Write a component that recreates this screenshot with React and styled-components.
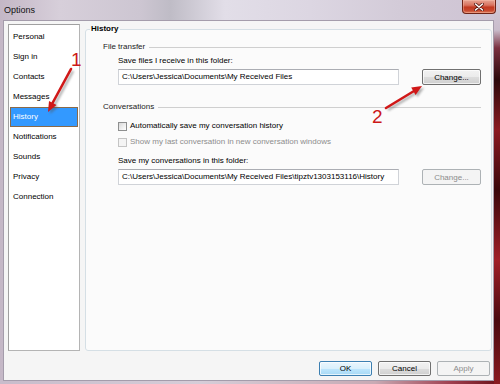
import React from "react";
import styled, { createGlobalStyle } from "styled-components";

const GlobalStyle = createGlobalStyle`
  html, body {
    margin: 0;
    padding: 0;
  }
  body {
    width: 500px;
    height: 384px;
    overflow: hidden;
    font-family: "Liberation Sans", Arial, sans-serif;
  }
  * {
    box-sizing: border-box;
  }
`;

const navItems = [
  "Personal",
  "Sign in",
  "Contacts",
  "Messages",
  "History",
  "Notifications",
  "Sounds",
  "Privacy",
  "Connection",
];

const App = () => {
  return (
    <>
      <GlobalStyle />
      <Frame>
        <TitleBar>
          <Title>Options</Title>
          <CloseButton aria-label="Close">
            <svg width="10" height="8" viewBox="0 0 10 8">
              <path d="M1.5 1 L8.5 7 M8.5 1 L1.5 7" stroke="#5a1810" strokeWidth="3" strokeLinecap="round" />
              <path d="M1.5 1 L8.5 7 M8.5 1 L1.5 7" stroke="#ffffff" strokeWidth="1.6" strokeLinecap="round" />
            </svg>
          </CloseButton>
        </TitleBar>

        <Client>
          <MainRow>
            <NavList>
              {navItems.map((item) => (
                <NavItem key={item} $active={item === "History"}>
                  {item}
                </NavItem>
              ))}
            </NavList>

            <Panel>
              <Legend>History</Legend>

              <SectionHeader>
                <span>File transfer</span>
                <Rule />
              </SectionHeader>
              <Indent>
                <FieldLabel>Save files I receive in this folder:</FieldLabel>
                <PathRow>
                  <PathBox>C:\Users\Jessica\Documents\My Received Files</PathBox>
                  <SmallButton>Change...</SmallButton>
                </PathRow>
              </Indent>

              <SectionHeader $gap={17}>
                <span>Conversations</span>
                <Rule />
              </SectionHeader>
              <Indent>
                <CheckRow $gap={9}>
                  <CheckBox />
                  <span>Automatically save my conversation history</span>
                </CheckRow>
                <CheckRow $gap={6} $disabled>
                  <CheckBox $disabled />
                  <span>Show my last conversation in new conversation windows</span>
                </CheckRow>
                <FieldLabel $gap={9}>Save my conversations in this folder:</FieldLabel>
                <PathRow>
                  <PathBox>C:\Users\Jessica\Documents\My Received Files\tipztv1303153116\History</PathBox>
                  <SmallButton disabled>Change...</SmallButton>
                </PathRow>
              </Indent>
            </Panel>
          </MainRow>

          <ButtonBar>
            <DialogButton $focused>OK</DialogButton>
            <DialogButton>Cancel</DialogButton>
            <DialogButton disabled>Apply</DialogButton>
          </ButtonBar>
        </Client>

        {/* red callouts drawn over the dialog */}
        <Annotations viewBox="0 0 500 384" width="500" height="384">
          <defs>
            <filter id="soft" x="-20%" y="-20%" width="140%" height="140%">
              <feGaussianBlur stdDeviation="1" />
            </filter>
          </defs>
          <g opacity="0.45" filter="url(#soft)" transform="translate(2 2)">
            <path d="M71 69 L52 104" stroke="#555" strokeWidth="2.6" />
            <polygon points="48,112 56.5,105 49,101" fill="#555" />
            <path d="M386 108 L414 91" stroke="#555" strokeWidth="2.6" />
            <polygon points="422,86 415.6,95 411.2,87.6" fill="#555" />
          </g>
          <path d="M71 69 L52 104" stroke="#d01818" strokeWidth="2.6" strokeLinecap="round" />
          <polygon points="48,112 56.5,105 49,101" fill="#d01818" />
          <path d="M386 108 L414 91" stroke="#d01818" strokeWidth="2.6" strokeLinecap="round" />
          <polygon points="422,86 415.6,95 411.2,87.6" fill="#d01818" />
          <CalloutNumber x="71" y="66">1</CalloutNumber>
          <CalloutNumber x="372" y="123">2</CalloutNumber>
        </Annotations>
      </Frame>
    </>
  );
};

export default App;

const Frame = styled.div`
  position: relative;
  width: 500px;
  height: 384px;
  display: flex;
  flex-direction: column;
  background:
    linear-gradient(
        to bottom,
        #d4cad8 0,
        #c9bccb 30px,
        #7a3040 48px,
        #2a080c 80px,
        #8a1a22 130px,
        #3a070b 190px,
        #a02028 260px,
        #4a0a10 320px,
        #8a1a20 384px
      )
      right top / 6px 100% no-repeat,
    linear-gradient(to right, #c8bccb 0, #d6cdd8 40%, #c8aab4 75%, #a04050 90%, #6a1018 100%)
      left bottom / 100% 4px no-repeat,
    linear-gradient(
      to right,
      #c4b7c6 0,
      #d7cfda 12%,
      #cdc6d2 28%,
      #bfbcc6 34%,
      #e2dee8 45%,
      #dcd6e2 62%,
      #d3cbd8 80%,
      #cec3d3 100%
    );
`;

const TitleBar = styled.div`
  display: flex;
  align-items: flex-start;
  height: 20px;
  flex-shrink: 0;
`;

const Title = styled.div`
  padding-left: 4px;
  line-height: 20px;
  font-size: 9px;
  color: #111;
`;

const CloseButton = styled.div`
  margin-left: auto;
  margin-right: 4px;
  width: 34px;
  height: 14px;
  display: flex;
  align-items: center;
  justify-content: center;
  border: 1px solid #6e2418;
  border-top: none;
  border-radius: 0 0 4px 4px;
  background: linear-gradient(to bottom, #e6a494 0, #d9735f 40%, #c23a22 55%, #c8472e 80%, #dc7a5a 100%);
  box-shadow: inset 0 0 0 1px rgba(255, 200, 180, 0.4);
`;

const Client = styled.div`
  display: flex;
  flex-direction: column;
  height: 361px;
  margin: 0 6px 3px 3px;
  padding: 3px 1px 0 4px;
  background: #f5f5f5;
  border: 1px solid #a49cab;
`;

const MainRow = styled.div`
  display: flex;
  height: 327px;
  gap: 5px;
`;

const NavList = styled.div`
  width: 72px;
  padding-top: 2px;
  background: #ffffff;
  border: 1px solid #a0a0a0;
  border-right-color: #b4b4b4;
  border-bottom-color: #b4b4b4;
`;

const NavItem = styled.div`
  height: 20px;
  margin: 0 1px;
  padding-left: 3px;
  line-height: 20px;
  font-size: 8px;
  color: ${(p) => (p.$active ? "#ffffff" : "#000")};
  background: ${(p) => (p.$active ? "#3399ff" : "transparent")};
  outline: ${(p) => (p.$active ? "1px solid #8a6a4a" : "none")};
  outline-offset: -1px;
`;

const Panel = styled.fieldset`
  flex: 1;
  margin: 0;
  padding: 0 10px 0 17px;
  min-width: 0;
  background: #fbfbfb;
  border: 1px solid #d5dfe5;
  border-radius: 3px;
`;

const Legend = styled.legend`
  margin-left: -13px;
  padding: 0 1px;
  font-size: 8px;
  line-height: 10px;
  font-weight: bold;
  color: #000;
`;

const SectionHeader = styled.div`
  display: flex;
  align-items: center;
  gap: 4px;
  margin-top: ${(p) => p.$gap ?? 8}px;
  font-size: 8px;
  line-height: 10px;
  color: #222;
`;

const Rule = styled.div`
  flex: 1;
  height: 1px;
  background: #cfcfcf;
`;

const Indent = styled.div`
  padding-left: 15px;
`;

const FieldLabel = styled.div`
  margin-top: ${(p) => p.$gap ?? 4}px;
  font-size: 8px;
  line-height: 10px;
  color: #000;
`;

const PathRow = styled.div`
  display: flex;
  align-items: center;
  justify-content: space-between;
  margin-top: 3px;
`;

const PathBox = styled.div`
  width: 281px;
  height: 16px;
  padding-left: 3px;
  font-size: 8px;
  line-height: 14px;
  color: #000;
  white-space: nowrap;
  overflow: hidden;
  background: #ffffff;
  border: 1px solid #d0d3d8;
  border-top-color: #abadb3;
`;

const SmallButton = styled.button`
  width: 59px;
  height: 16px;
  padding: 0;
  font-family: inherit;
  font-size: 8px;
  color: #000;
  border: 1px solid #707070;
  border-radius: 2px;
  background: linear-gradient(to bottom, #f2f2f2 0, #ebebeb 50%, #dddddd 51%, #cfcfcf 100%);
  box-shadow: inset 0 0 0 1px rgba(255, 255, 255, 0.7);

  &:disabled {
    color: #8c8c8c;
    border-color: #adb2b5;
    background: #f4f4f4;
    box-shadow: none;
  }
`;

const CheckRow = styled.div`
  display: flex;
  align-items: center;
  gap: 3px;
  margin-top: ${(p) => p.$gap}px;
  font-size: 8px;
  line-height: 10px;
  color: ${(p) => (p.$disabled ? "#8d8d8d" : "#000")};
`;

const CheckBox = styled.span`
  width: 9px;
  height: 9px;
  border: 1px solid ${(p) => (p.$disabled ? "#c4c4c4" : "#8e8f8f")};
  background: ${(p) =>
    p.$disabled ? "#f4f4f4" : "linear-gradient(135deg, #d8d8d8 0, #f4f4f4 70%, #ffffff 100%)"};
`;

const ButtonBar = styled.div`
  display: flex;
  justify-content: flex-end;
  gap: 6px;
  margin-top: 10px;
  padding-right: 2px;
`;

const DialogButton = styled.button`
  width: 53px;
  height: 15px;
  padding: 0;
  font-family: inherit;
  font-size: 8px;
  color: #000;
  border: 1px solid ${(p) => (p.$focused ? "#3c7fb1" : "#707070")};
  border-radius: 2px;
  background: ${(p) =>
    p.$focused
      ? "linear-gradient(to bottom, #eaf6fd 0, #d9f0fc 50%, #bee6fd 51%, #a7d9f5 100%)"
      : "linear-gradient(to bottom, #f2f2f2 0, #ebebeb 50%, #dddddd 51%, #cfcfcf 100%)"};
  box-shadow: inset 0 0 0 1px rgba(255, 255, 255, 0.7);

  &:disabled {
    color: #8c8c8c;
    border-color: #adb2b5;
    background: #f4f4f4;
    box-shadow: none;
  }
`;

const Annotations = styled.svg`
  position: absolute;
  left: 0;
  top: 0;
  pointer-events: none;
`;

const CalloutNumber = styled.text`
  font-family: "Liberation Sans", Arial, sans-serif;
  font-size: 19px;
  fill: #cc1818;
`;
